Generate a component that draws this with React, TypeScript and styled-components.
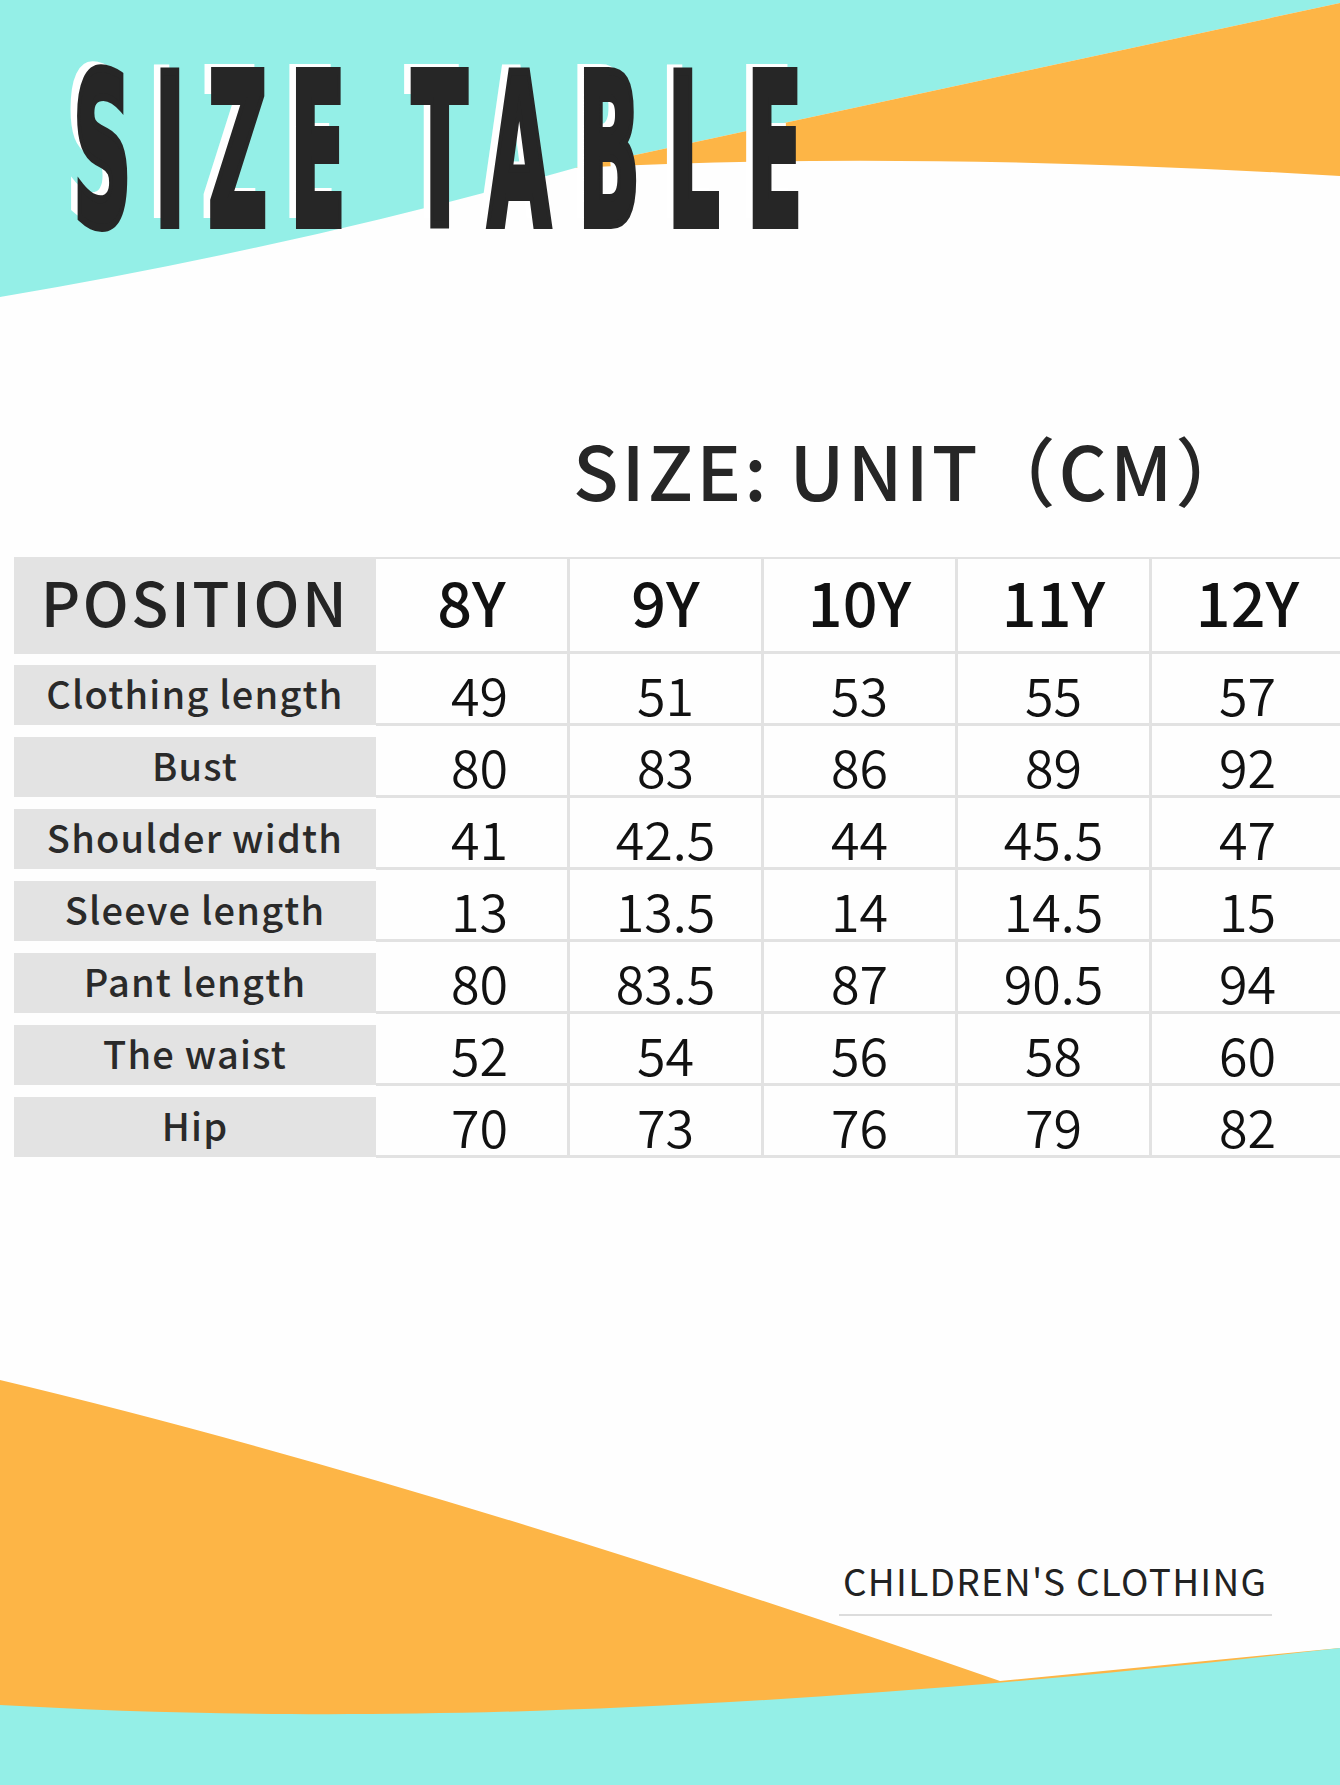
import React from "react";
import styled, { createGlobalStyle } from "styled-components";

const GlobalStyle = createGlobalStyle`
  html, body {
    margin: 0;
    padding: 0;
    background: #fefefe;
  }
`;

const sizes = ["8Y", "9Y", "10Y", "11Y", "12Y"];

const rows: [string, string[]][] = [
  ["Clothing length", ["49", "51", "53", "55", "57"]],
  ["Bust", ["80", "83", "86", "89", "92"]],
  ["Shoulder width", ["41", "42.5", "44", "45.5", "47"]],
  ["Sleeve length", ["13", "13.5", "14", "14.5", "15"]],
  ["Pant length", ["80", "83.5", "87", "90.5", "94"]],
  ["The waist", ["52", "54", "56", "58", "60"]],
  ["Hip", ["70", "73", "76", "79", "82"]],
];

const Backdrop = () => (
  <BackdropSvg viewBox="0 0 1340 1785" preserveAspectRatio="none">
    <path d="M0,0 H1340 V3 L575,168 Q291,248 0,297 Z" fill="#94efe7" />
    <path d="M1340,3 L575,168 Q900,150 1340,176 Z" fill="#fdb546" />
    <path d="M0,1380 Q420,1480 1000,1681 L1340,1648 V1785 H0 Z" fill="#fdb546" />
    <path d="M0,1705 C300,1722 700,1722 1340,1648 V1785 H0 Z" fill="#94efe7" />
  </BackdropSvg>
);

const App = () => {
  return (
    <Page>
      <GlobalStyle />
      <Backdrop />
      <Content>
        <TitleRow>
          <Title>
            SIZE <TitleWord $spacing={64}>TABLE</TitleWord>
          </Title>
        </TitleRow>
        <Subtitle>SIZE: UNIT（CM）</Subtitle>
        <SizeGrid>
          <HeadLabel>POSITION</HeadLabel>
          {sizes.map((s) => (
            <HeadCell key={s}>{s}</HeadCell>
          ))}
          {rows.map(([label, values]) => (
            <React.Fragment key={label}>
              <RowLabel>{label}</RowLabel>
              {values.map((v, i) => (
                <ValueCell key={i} $first={i === 0}>
                  {v}
                </ValueCell>
              ))}
            </React.Fragment>
          ))}
        </SizeGrid>
        <Footer>
          <FooterText>CHILDREN'S CLOTHING</FooterText>
        </Footer>
      </Content>
    </Page>
  );
};

const Page = styled.div`
  position: relative;
  width: 1340px;
  height: 1785px;
  overflow: hidden;
  background: #fefefe;
`;

const BackdropSvg = styled.svg`
  position: absolute;
  inset: 0;
  width: 1340px;
  height: 1785px;
  z-index: 0;
`;

const Content = styled.div`
  position: relative;
  z-index: 1;
  display: flex;
  flex-direction: column;
`;

const TitleRow = styled.div`
  height: 200px;
  margin-top: 53px;
  padding-left: 73px;
  white-space: nowrap;
`;

const Title = styled.h1`
  display: inline-block;
  margin: 0;
  font-family: "DejaVu Sans Condensed", "DejaVu Sans", sans-serif;
  font-stretch: condensed;
  font-weight: 700;
  font-size: 210px;
  line-height: 200px;
  letter-spacing: 54px;
  word-spacing: -20px;
  color: #262626;
  -webkit-text-stroke: 8px #262626;
  text-shadow: -19px -7px 0 #ffffff;
  transform: scaleX(0.43);
  transform-origin: left top;
`;

const TitleWord = styled.span<{ $spacing: number }>`
  letter-spacing: ${(p) => p.$spacing}px;
`;

const Subtitle = styled.div`
  margin-top: 178px;
  padding-left: 573px;
  font-family: "Noto Sans CJK SC", "Noto Sans", sans-serif;
  font-weight: 500;
  font-size: 75px;
  line-height: 75px;
  letter-spacing: 3px;
  color: #262626;
  white-space: nowrap;
`;

const SizeGrid = styled.div`
  display: grid;
  grid-template-columns: 362px repeat(5, 194px);
  margin-top: 51px;
  margin-left: 14px;
  font-family: "Noto Sans CJK SC", "Noto Sans", sans-serif;
`;

const HeadLabel = styled.div`
  box-sizing: border-box;
  height: 97px;
  padding-bottom: 10px;
  background: #e3e3e3;
  display: flex;
  align-items: center;
  justify-content: center;
  font-size: 61px;
  line-height: 1;
  font-weight: 500;
  letter-spacing: 2.5px;
  color: #242424;
`;

const HeadCell = styled.div`
  box-sizing: border-box;
  height: 97px;
  padding-bottom: 10px;
  border-top: 2px solid #e2e2e2;
  border-bottom: 3px solid #e2e2e2;
  border-right: 3px solid #e2e2e2;
  display: flex;
  align-items: center;
  justify-content: center;
  font-size: 61px;
  line-height: 1;
  font-weight: 500;
  color: #111111;
`;

const RowLabel = styled.div`
  box-sizing: border-box;
  height: 60px;
  margin-top: 11px;
  padding-bottom: 5px;
  background: #e3e3e3;
  display: flex;
  align-items: center;
  justify-content: center;
  font-size: 38px;
  line-height: 1;
  font-weight: 500;
  letter-spacing: 1.2px;
  color: #2a2a2a;
`;

const ValueCell = styled.div<{ $first?: boolean }>`
  box-sizing: border-box;
  height: 72px;
  padding-top: 11px;
  padding-left: ${(p) => (p.$first ? "16px" : "0")};
  border-bottom: 3px solid #e2e2e2;
  border-right: 3px solid #e2e2e2;
  display: flex;
  align-items: center;
  justify-content: center;
  font-size: 52px;
  line-height: 1;
  font-weight: 350;
  color: #111111;
`;

const Footer = styled.div`
  display: flex;
  justify-content: flex-end;
  margin-top: 403px;
  padding-right: 68px;
`;

const FooterText = styled.div`
  width: 433px;
  box-sizing: border-box;
  padding: 0 0 15px 4px;
  border-bottom: 2px solid #dcdcdc;
  font-family: "Noto Sans CJK SC", "Noto Sans", sans-serif;
  font-weight: 400;
  font-size: 37px;
  line-height: 38px;
  letter-spacing: 1.25px;
  color: #222222;
  white-space: nowrap;
`;

export default App;
